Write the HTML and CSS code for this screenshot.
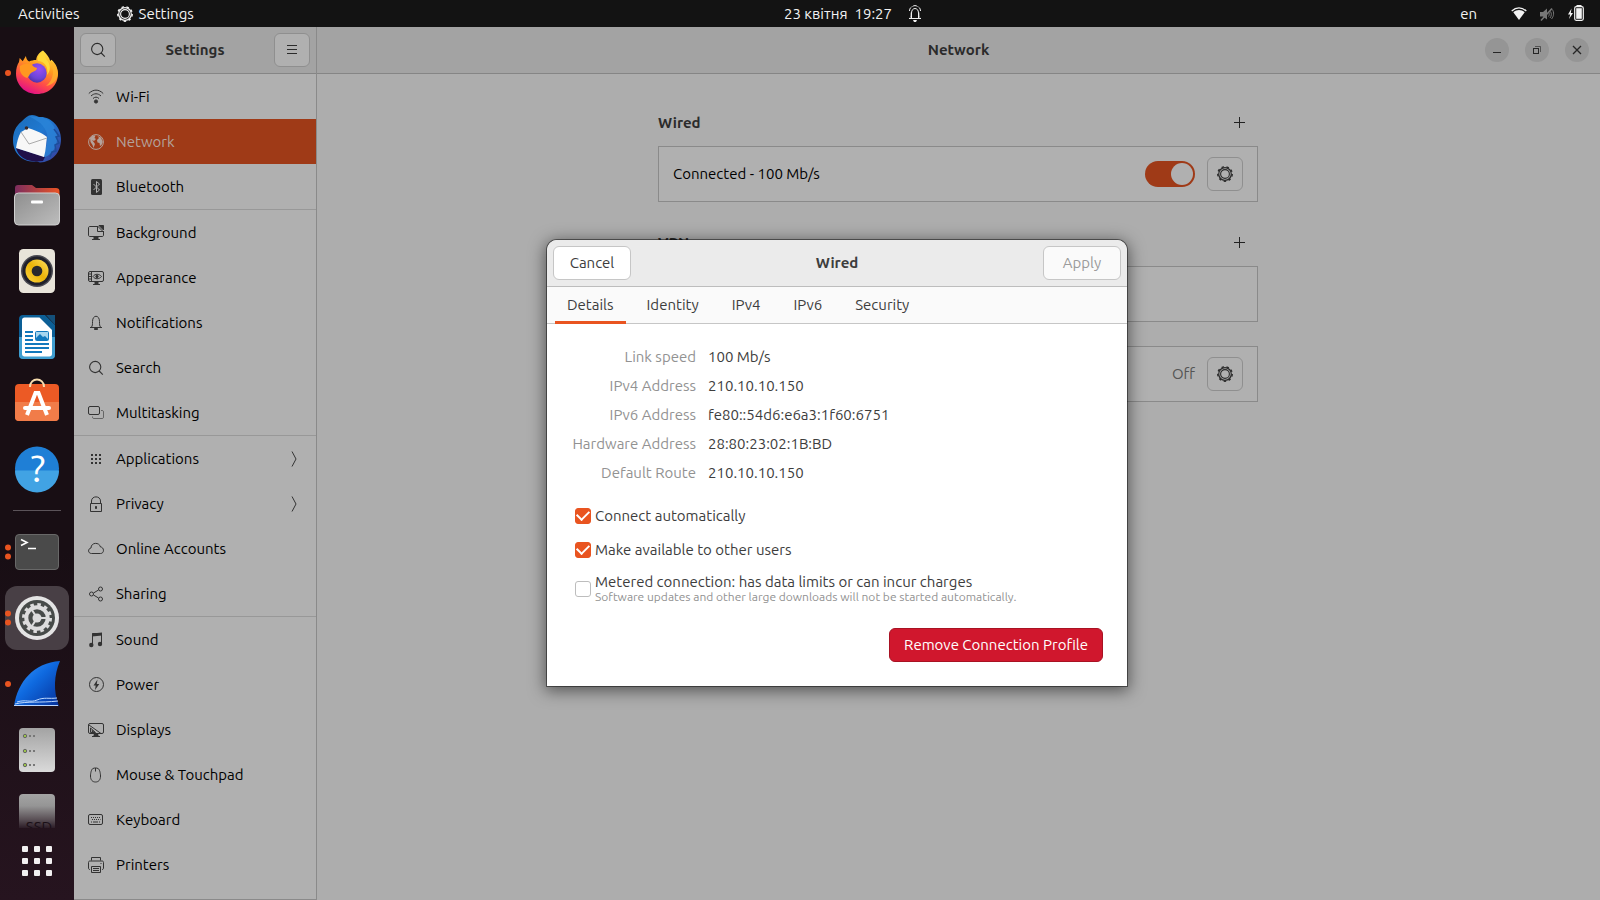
FILE: index.html
```html
<!DOCTYPE html>
<html lang="en">
<head>
<meta charset="utf-8">
<title>Settings – Network</title>
<link rel="stylesheet" href="styles.css">
</head>
<body>
<svg class="defs" width="0" height="0" aria-hidden="true">
  <symbol id="i-gear" viewBox="0 0 16 16"><circle cx="8" cy="8" r="6.3" fill="none" stroke="currentColor" stroke-width="1.2"/><circle cx="8" cy="8" r="4.4" fill="none" stroke="currentColor" stroke-width="1.1"/><circle cx="8" cy="8" r="7.2" fill="none" stroke="currentColor" stroke-width="1.5" stroke-dasharray="2.5 2.53"/></symbol>
  <symbol id="i-search" viewBox="0 0 16 16"><g fill="none" stroke="currentColor" stroke-width="1.1"><circle cx="7.2" cy="7" r="5.6"/><path d="M11.2 11l3.6 3.6"/></g></symbol>
  <symbol id="i-plus" viewBox="0 0 16 16"><path d="M8.5 2v11M3 7.5h11" stroke="currentColor" fill="none"/></symbol>
</svg>

<div class="desktop">
  <header class="topbar">
    <div class="topbar-left">
      <button type="button">Activities</button>
      <button type="button" class="app-menu"><svg width="16" height="16"><use href="#i-gear"/></svg>Settings</button>
    </div>
    <button type="button" class="clock"><span>23 квітня</span><span>19:27</span>
      <svg width="16" height="18" viewBox="0 0 16 18" fill="none" stroke="#f2f2f2"><path d="M2 13.500h12M4.500 13V8c0-6 7-6 7 0v5M2.500 6c0-1.500.5-3 2-4M13.500 6c0-1.500-.5-3-2-4M5.500 1.500c1.500-1.200 3.500-1.200 5 0M3.300 12.500c1-1 .9-3 .9-5M12.700 12.500c-1-1-.9-3-.9-5"/><path d="M6 15h4l-1 2H7z" fill="#f2f2f2" stroke="none"/></svg>
    </button>
    <div class="topbar-right">
      <button type="button" class="lang">en</button>
      <button type="button" class="status" aria-label="System menu">
        <svg width="16" height="16" viewBox="0 0 16 16"><path d="M.7 5c4.500-4 10.100-4 14.600 0" fill="none" stroke="#f2f2f2" stroke-width="1.300"/><path d="M2.300 6.200c3.500-2.900 7.900-2.900 11.400 0L8 14z" fill="#f2f2f2"/></svg>
        <svg width="16" height="16" viewBox="0 0 16 16" stroke="#777" fill="none"><path d="M1 6h3l4-3.500v11L4 10.500H1z" fill="#777" stroke="none"/><path d="M2 14.500L13 2.500" stroke="#777" stroke-width="1.500"/><path d="M9.500 6c1 1.300 1 3 0 4.500M11.500 5.500c1.300 2 1 4.500-.5 6.500M13.300 3.500c2 3 1.700 6.500-.8 9.500"/></svg>
        <svg width="18" height="18" viewBox="0 0 18 18" fill="#f2f2f2"><path d="M4.500 3.500L1 9.500h2.200L2 14 6 8H3.800z"/><rect x="9.500" y="0" width="5" height="2"/><rect x="7.700" y="1.700" width="8.600" height="13.600" rx="1.500" fill="none" stroke="#f2f2f2" stroke-width="1.200"/><rect x="9.200" y="3.200" width="5.600" height="10.600"/></svg>
      </button>
    </div>
  </header>

  <div class="workspace">
    <nav class="dock" aria-label="Dock">
      <button type="button" aria-label="Firefox"><svg width="74" height="64" viewBox="0 0 74 64">
        <defs><linearGradient id="ff" x1=".8" y1="0" x2=".35" y2="1"><stop offset="0" stop-color="#fff24a"/><stop offset=".4" stop-color="#ff9a1f"/><stop offset=".72" stop-color="#ff4a4a"/><stop offset="1" stop-color="#e00f88"/></linearGradient><radialGradient id="ffc" cx=".6" cy=".3" r=".8"><stop offset="0" stop-color="#9b4cf5"/><stop offset=".6" stop-color="#6b45d8"/><stop offset="1" stop-color="#4a2a9a"/></radialGradient></defs>
        <circle cx="8" cy="32" r="3" fill="#e95420"/>
        <path d="M43 9.500c4 4 6.500 7 7.200 10.500l1.300-1.300c4.500 4 6.500 9 6.500 13.800C58 44.500 49 53 37 53S16 44 16 32.500c0-5 1.200-8.500 3-11.500l.7-4 3 3.200 3.200-5.200c.4 3 1.500 4.500 3.300 5.500 2-1 4.300-1.500 7-1.500.3-4 3-7.500 6.800-9.500z" fill="url(#ff)"/>
        <circle cx="37" cy="32" r="9.700" fill="url(#ffc)"/>
        <path d="M20 25c5-3 11-3 14 1l3 1c0 3-4 3.500-6 5s-2 4-4 5c-5-2-8-6-7-12z" fill="#ff9820"/>
        <path d="M38 20c6 0 11 6 9 14 4-4 4-11-1-16l-3-8c-4 3-6 6-5 10z" fill="#ffd83a"/>
        <path d="M50 20c5 8 4 19-4 25 8-1 12-8 12-13-1-6-3-10-8-12z" fill="#ffb32c" opacity=".75"/></svg></button>
      <button type="button" aria-label="Thunderbird"><svg width="74" height="64" viewBox="0 0 74 64">
        <defs><linearGradient id="tb" x1="0" y1="0" x2="1" y2="1"><stop offset="0" stop-color="#1c6cb8"/><stop offset=".45" stop-color="#1f78d0"/><stop offset="1" stop-color="#3a3a98"/></linearGradient></defs>
        <path d="M29 8.500c4-1.500 8 .5 10 1.500 12-1 22 10 22 22 0 14-9 23-21 23.500l-3-1C22 56 13 46 13 33c0-8 3-14 8-18 3-3 5-5 8-6.500z" fill="url(#tb)"/>
        <path d="M29 9c6 4 13 6 17 15s-1 20-6 28c12-3 18-12 17-23S48 10 39 10z" fill="#2a84d8" opacity=".8"/>
        <path d="M16 41l29 9-2 4-6 .5c-11 0-19-5-21-13.500z" fill="#20104a"/>
        <path d="M21 25c3-1 4-3 7-4 6 2 13 4 19 9-1 6-1 13-3 20l-28-9c1-6 2-11 5-16z" fill="#f7f7f7"/>
        <path d="M21 25l8 12 18-6" fill="none" stroke="#aaa"/>
        <path d="M54 22l5 7-3 1 3 6-4 2 1 6-4 1-2 5" fill="none" stroke="#1c4d9b" stroke-width="1.500"/>
        <circle cx="26.500" cy="21" r="1.800" fill="#3a2a2a"/></svg></button>
      <button type="button" aria-label="Files"><svg width="74" height="64" viewBox="0 0 74 64">
        <defs><linearGradient id="fo"><stop offset="0" stop-color="#7c2d5e"/><stop offset="1" stop-color="#ea5425"/></linearGradient><linearGradient id="fg" x1="0" y1="0" x2="1" y2="1"><stop offset="0" stop-color="#8e8e8e"/><stop offset="1" stop-color="#bdbdbd"/></linearGradient></defs>
        <path d="M15 26V15c0-2 1-3 3-3h14l4 3h20c2 0 3.500 1 3.500 3v8z" fill="url(#fo)"/>
        <rect x="14.500" y="20" width="45" height="32" rx="4" fill="url(#fg)" stroke="#d0d0d0"/><rect x="31" y="27.500" width="12" height="3" rx="1" fill="#fff"/></svg></button>
      <button type="button" aria-label="Rhythmbox"><svg width="74" height="64" viewBox="0 0 74 64">
        <defs><linearGradient id="rb" x1="0" y1="1" x2="1" y2="0"><stop offset="0" stop-color="#ffd640"/><stop offset=".5" stop-color="#eab308"/><stop offset="1" stop-color="#ffe060"/></linearGradient></defs>
        <rect x="19" y="10" width="36" height="44" rx="4.500" fill="#e8e4da"/><circle cx="37" cy="32" r="16" fill="#4a4a52"/><circle cx="37" cy="32" r="14.500" fill="#20202a"/><circle cx="37" cy="32" r="11.500" fill="url(#rb)"/><circle cx="37" cy="32" r="5.300" fill="#29292d"/></svg></button>
      <button type="button" aria-label="LibreOffice Writer"><svg width="74" height="64" viewBox="0 0 74 64">
        <path d="M23 10h22l10 10v30c0 2.500-1.500 4-4 4H23c-2.500 0-4-1.500-4-4V14c0-2.500 1.500-4 4-4z" fill="#0c5f96"/><path d="M19 32h36v18c0 2.500-1.500 4-4 4H23c-2.500 0-4-1.500-4-4z" fill="#3f9ed0"/>
        <path d="M46 10h9v10z" fill="#14507a"/><path d="M22 15c0-1.500 1-2.500 2.500-2.500h15L52 25v24c0 1.500-1 2.500-2.500 2.500h-25C23 51.500 22 50.500 22 49z" fill="#fff"/>
        <path d="M25 27h8M25 31h8M25 35h8M25 39h24M25 43h24M25 47h17" stroke="#1279bd" stroke-width="2"/><rect x="35.500" y="26.500" width="13" height="9" rx="1" fill="#a7d6ef" stroke="#1279bd"/><path d="M36 35v-2l4-4 3 3 2-1 3 3v1z" fill="#1279bd"/></svg></button>
      <button type="button" aria-label="Ubuntu Software"><svg width="74" height="64" viewBox="0 0 74 64">
        <rect x="15" y="13" width="44" height="37" rx="4" fill="#ec5a25"/><path d="M15 31h44v15c0 2.500-1.500 4-4 4H19c-2.500 0-4-1.500-4-4z" fill="#f17c49"/><path d="M30 16c0-10 14-10 14 0" fill="none" stroke="#f7dcae" stroke-width="2"/>
        <g stroke="#fff" fill="none"><path d="M27 44l8.500-22h3l8.500 22" stroke-width="4"/><path d="M25 37h24" stroke-width="4" stroke-linecap="round"/></g></svg></button>
      <button type="button" aria-label="Help"><svg width="74" height="64" viewBox="0 0 74 64">
        <circle cx="37" cy="31.500" r="22" fill="#1f7fd6"/><path d="M15 33.500h44a22 22 0 0 1-44 0z" fill="#41a3e4"/><text x="38" y="45" text-anchor="middle" class="glyph-help">?</text></svg></button>
      <hr>
      <button type="button" aria-label="Terminal"><svg width="74" height="64" viewBox="0 0 74 64">
        <circle cx="8" cy="27.500" r="3" fill="#e95420"/><circle cx="8" cy="36.500" r="3" fill="#e95420"/>
        <rect x="15.500" y="14.500" width="43" height="35" rx="3.500" fill="#4a4a4a" stroke="#686868"/><path d="M21 19.500l6 3-6 3M28 28.500h8" fill="none" stroke="#fff" stroke-width="1.600"/></svg></button>
      <button type="button" aria-label="Settings" class="active"><svg width="74" height="64" viewBox="0 0 74 64">
        <circle cx="8" cy="27.500" r="3" fill="#e95420"/><circle cx="8" cy="36.500" r="3" fill="#e95420"/>
        <circle cx="37" cy="32" r="22" fill="#e4e4e4"/><circle cx="37" cy="32" r="18" fill="#474b49"/>
        <circle cx="37" cy="32" r="13.500" fill="none" stroke="#dcdcdc" stroke-width="3" stroke-dasharray="3.530 3.530"/><circle cx="37" cy="32" r="10.700" fill="none" stroke="#dcdcdc" stroke-width="4"/><circle cx="37" cy="32" r="4.500" fill="#dcdcdc"/><path d="M37 32h9M37 32l-5 8M37 32l-5-8" stroke="#dcdcdc" stroke-width="2"/></svg></button>
      <button type="button" aria-label="Wireshark"><svg width="74" height="64" viewBox="0 0 74 64">
        <defs><linearGradient id="ws" x1="0" y1="0" x2="1" y2="1"><stop offset="0" stop-color="#3b9cff"/><stop offset=".45" stop-color="#0f6ae0"/><stop offset="1" stop-color="#052f98"/></linearGradient></defs>
        <circle cx="8" cy="32" r="3" fill="#e95420"/><path d="M14 54C18 29 34 11 60 9c-6 14-7 30-1 45z" fill="url(#ws)"/><path d="M17 50c9-3 13 1 20-2s12-1 20-2M15 52c12-3 25-1 43-3M14 53.500h44" fill="none" stroke="#bcd8ff"/></svg></button>
      <button type="button" aria-label="Server"><svg width="74" height="64" viewBox="0 0 74 64">
        <defs><linearGradient id="sv" x1="0" y1="0" x2="0" y2="1"><stop offset="0" stop-color="#a3a3a3"/><stop offset="1" stop-color="#dadada"/></linearGradient></defs>
        <rect x="19" y="10" width="36" height="44" rx="4" fill="url(#sv)"/><g fill="#9bc34a" stroke="#666"><circle cx="25" cy="18" r="1.700"/><circle cx="25" cy="33" r="1.700"/><circle cx="25" cy="47" r="1.700"/></g><path d="M29 18h2m2 0h2M29 33h2m2 0h2M29 47h2m2 0h2" stroke="#777" stroke-width="2"/></svg></button>
      <button type="button" aria-label="SSD drive" class="clipped"><svg width="74" height="44" viewBox="0 0 74 44">
        <defs><linearGradient id="sd" x1="0" y1="0" x2="0" y2="1"><stop offset="0" stop-color="#a4a4a4"/><stop offset=".35" stop-color="#959595"/><stop offset=".75" stop-color="#5a5056"/><stop offset="1" stop-color="#2c1d27"/></linearGradient></defs>
        <path d="M23 10h28c2.500 0 4 1.500 4 4v30H19V14c0-2.500 1.500-4 4-4z" fill="url(#sd)"/><text x="39" y="48" text-anchor="middle" class="glyph-ssd">SSD</text></svg></button>
      <button type="button" aria-label="Show Applications" class="apps"><svg width="30" height="30" viewBox="0 0 30 30" fill="#f2f0f1"><rect width="6" height="6" rx="1"/><rect x="12" width="6" height="6" rx="1"/><rect x="24" width="6" height="6" rx="1"/><rect y="12" width="6" height="6" rx="1"/><rect x="12" y="12" width="6" height="6" rx="1"/><rect x="24" y="12" width="6" height="6" rx="1"/><rect y="24" width="6" height="6" rx="1"/><rect x="12" y="24" width="6" height="6" rx="1"/><rect x="24" y="24" width="6" height="6" rx="1"/></svg></button>
    </nav>

    <div class="window">
      <aside class="sidebar">
        <div class="headerbar side-head">
          <button type="button" class="icon-btn" aria-label="Search"><svg width="16" height="16"><use href="#i-search"/></svg></button>
          <h1>Settings</h1>
          <button type="button" class="icon-btn" aria-label="Menu"><svg width="16" height="16" viewBox="0 0 16 16"><path d="M3 3.500h10M3 7.500h10M3 11.500h10" stroke="currentColor"/></svg></button>
        </div>
        <ul class="panels">
          <li><a href="#"><svg width="16" height="16" viewBox="0 0 16 16" fill="none" stroke="currentColor"><path d="M.8 4.500c4.500-4.500 9.900-4.500 14.400 0M3 7c3.200-3 6.800-3 10 0M5 9.500c2-1.800 4-1.800 6 0"/><circle cx="8" cy="12.500" r="1.600" fill="currentColor"/></svg>Wi-Fi</a></li>
          <li><a href="#" class="selected" aria-current="page"><svg width="16" height="16" viewBox="0 0 16 16"><circle cx="8" cy="8" r="7.400" fill="none" stroke="currentColor"/><path d="M2 4l3-2.500 2.500 0L6.500 4 8 5 6 7 4 6l2 2.500L7 10l-1.500 4L4.500 11 2.500 8zM9.500 2l3.500 1.500L14.800 8l-1.300 3-1.500 1-.5-3-2-.5-.5-2.500 2-2z" fill="currentColor"/></svg>Network</a></li>
          <li class="group-end"><a href="#"><svg width="16" height="16" viewBox="0 0 16 16"><rect x="3" width="11" height="16" rx="1.500" fill="currentColor"/><path d="M5.500 5l6 6L8.500 13.500v-11l3 2.500-6 6" fill="none" stroke="#b0b0b0"/></svg>Bluetooth</a></li>
          <li><a href="#"><svg width="16" height="16" viewBox="0 0 16 16" fill="none" stroke="currentColor"><path d="M9 1.500H2c-1 0-1.500.5-1.500 1.500v7c0 1 .5 1.500 1.500 1.500h12c1 0 1.500-.5 1.500-1.500V6"/><path d="M9.500 1v5.500H15z"/><path d="M11 .5h4.500V5z" fill="currentColor"/><path d="M6 12h4v2.500h2H4h2z" fill="currentColor"/></svg>Background</a></li>
          <li><a href="#"><svg width="16" height="16" viewBox="0 0 16 16" fill="none" stroke="currentColor"><rect x=".5" y="1.500" width="15" height="10" rx="1.500"/><path d="M3.500 2v9M0 4h3M0 6.500h3M0 9h3M5 6.500c2-3 6-3 8.500 0-2.500 3-6.500 3-8.500 0z"/><circle cx="9" cy="6.500" r="1.200" fill="currentColor"/><path d="M7 12h3v2.500h2H5h2z" fill="currentColor"/></svg>Appearance</a></li>
          <li><a href="#"><svg width="16" height="16" viewBox="0 0 16 16" fill="none" stroke="currentColor"><path d="M2 12.500h12M3.500 12c1-1.200 1-2.500 1-5.500 0-7 7-7 7 0 0 3 0 4.300 1 5.500"/><path d="M6.500 13.500h3v1h-3z" fill="currentColor"/></svg>Notifications</a></li>
          <li><a href="#"><svg width="16" height="16"><use href="#i-search"/></svg>Search</a></li>
          <li class="group-end"><a href="#"><svg width="16" height="16" viewBox="0 0 16 16" fill="none" stroke="currentColor"><rect x=".5" y="1.500" width="11" height="8" rx="1.500"/><path opacity=".6" d="M13 5.500h1c1 0 1.500.5 1.500 1.500v5c0 1-.5 1.500-1.500 1.500H6c-1 0-1.500-.5-1.500-1.500v-.5"/></svg>Multitasking</a></li>
          <li><a href="#"><svg width="16" height="16" viewBox="0 0 16 16"><path d="M3 4h2m2 0h2m2 0h2M3 8h2m2 0h2m2 0h2M3 12h2m2 0h2m2 0h2" stroke="currentColor" stroke-width="2"/></svg>Applications<svg class="chevron" width="8" height="16" viewBox="0 0 8 16"><path d="M2 .5L6 8l-4 7.500" fill="none" stroke="currentColor"/></svg></a></li>
          <li><a href="#"><svg width="16" height="16" viewBox="0 0 16 16" fill="none" stroke="currentColor"><path d="M2.500 7.500h11v8h-11zM3.500 7V5c0-5.500 9-5.500 9 0v2"/><path d="M7.500 10.500h1v2h-1z" fill="currentColor"/></svg>Privacy<svg class="chevron" width="8" height="16" viewBox="0 0 8 16"><path d="M2 .5L6 8l-4 7.500" fill="none" stroke="currentColor"/></svg></a></li>
          <li><a href="#"><svg width="16" height="16" viewBox="0 0 16 16" fill="none" stroke="currentColor"><path d="M3.500 12.500C-.3 12.500-.3 7.500 3 7c0-6 8.500-6 9.500-1 3.700 0 4.200 6.500 0 6.500z"/></svg>Online Accounts</a></li>
          <li class="group-end"><a href="#"><svg width="16" height="16" viewBox="0 0 16 16" fill="none" stroke="currentColor"><circle cx="3.500" cy="8" r="2"/><circle cx="12.500" cy="3" r="2"/><circle cx="12.500" cy="13" r="2"/><path d="M5.500 7l5-3M5.500 9l5 3"/></svg>Sharing</a></li>
          <li><a href="#"><svg width="16" height="16" viewBox="0 0 16 16"><path d="M4.500 13V1.500h9V12" fill="none" stroke="currentColor"/><path d="M4 1.500L14 .5v3l-10 1z" fill="currentColor"/><circle cx="3.300" cy="13" r="2.200" fill="currentColor"/><circle cx="12" cy="12" r="2.200" fill="currentColor"/></svg>Sound</a></li>
          <li><a href="#"><svg width="16" height="16" viewBox="0 0 16 16"><circle cx="8.500" cy="7.500" r="7" fill="none" stroke="currentColor"/><path d="M9.500 2.500L5.500 8.500h2.200l-.7 4.500 4.300-6H8.800z" fill="currentColor"/></svg>Power</a></li>
          <li><a href="#"><svg width="16" height="16" viewBox="0 0 16 16" fill="none" stroke="currentColor"><rect x=".5" y="1.500" width="15" height="10" rx="1.500"/><path d="M1 3l12 8.500M2.500 10.500V6l5 4.500zM4 9.500V8.500l1.500 1z"/><path d="M6 12.500h4v2h2H4h2z" fill="currentColor"/></svg>Displays</a></li>
          <li><a href="#"><svg width="16" height="16" viewBox="0 0 16 16" fill="none" stroke="currentColor"><path d="M5 1.500c1.500-.7 3.500-.7 5 0 1.500.5 2.500 4.500 2.500 7.500 0 4-2 6-5 6s-5-2-5-6c0-3 1-7 2.500-7.500zM7.500 1v3.500"/></svg>Mouse &amp; Touchpad</a></li>
          <li><a href="#"><svg width="16" height="16" viewBox="0 0 16 16" fill="none" stroke="currentColor"><rect x=".5" y="2.500" width="14" height="10" rx="1.500"/><path d="M3 5.500h9.500M4 7.500h8.500" stroke-dasharray="1 1"/><path d="M3 10h1m1 0h5m1 0h1"/></svg>Keyboard</a></li>
          <li><a href="#"><svg width="16" height="16" viewBox="0 0 16 16" fill="none" stroke="currentColor"><path d="M3.500 3.500v-3h9v3M2 12.500c-1 0-1.500-.5-1.500-1.500V5.500c0-1 .5-1.500 1.500-1.500h12c1 0 1.500.5 1.500 1.500V11c0 1-.5 1.500-1.500 1.500M3.500 9.500h9v6h-9zM5 11.500h6M5 13.500h6M12.500 6.500h1"/></svg>Printers</a></li>
        </ul>
      </aside>

      <main class="content">
        <div class="headerbar main-head">
          <h2>Network</h2>
          <div class="win-controls">
            <button type="button" aria-label="Minimize"><svg width="16" height="16" viewBox="0 0 16 16"><path d="M4 10.500h8" stroke="currentColor"/></svg></button>
            <button type="button" aria-label="Restore"><svg width="16" height="16" viewBox="0 0 16 16" fill="none" stroke="currentColor"><rect x="4.500" y="6.500" width="5" height="5"/><path opacity=".6" d="M6 4.500h5.500V10"/></svg></button>
            <button type="button" aria-label="Close"><svg width="16" height="16" viewBox="0 0 16 16"><path d="M4 4l8 8M12 4l-8 8" stroke="currentColor" stroke-width="1.300"/></svg></button>
          </div>
        </div>
        <div class="network">
          <section>
            <div class="section-head"><h3>Wired</h3><button type="button" aria-label="Add wired connection"><svg width="16" height="16"><use href="#i-plus"/></svg></button></div>
            <div class="card"><label for="wired-on">Connected - 100 Mb/s</label><input type="checkbox" role="switch" id="wired-on" class="switch" checked><button type="button" class="icon-btn" aria-label="Wired options"><svg width="16" height="16"><use href="#i-gear"/></svg></button></div>
          </section>
          <section>
            <div class="section-head"><h3>VPN</h3><button type="button" aria-label="Add VPN"><svg width="16" height="16"><use href="#i-plus"/></svg></button></div>
            <div class="card"></div>
          </section>
          <section>
            <div class="card"><span class="off">Off</span><button type="button" class="icon-btn" aria-label="Proxy options"><svg width="16" height="16"><use href="#i-gear"/></svg></button></div>
          </section>
        </div>
      </main>

      <div class="modal-layer">
        <div class="dialog" role="dialog" aria-labelledby="dlg-title">
          <div class="dialog-head">
            <button type="button" class="btn">Cancel</button>
            <h2 id="dlg-title">Wired</h2>
            <button type="button" class="btn" disabled>Apply</button>
          </div>
          <div class="tabs" role="tablist">
            <button type="button" role="tab" aria-selected="true">Details</button>
            <button type="button" role="tab" aria-selected="false">Identity</button>
            <button type="button" role="tab" aria-selected="false">IPv4</button>
            <button type="button" role="tab" aria-selected="false">IPv6</button>
            <button type="button" role="tab" aria-selected="false">Security</button>
          </div>
          <div class="dialog-body">
            <dl class="details">
              <dt>Link speed</dt><dd>100 Mb/s</dd>
              <dt>IPv4 Address</dt><dd>210.10.10.150</dd>
              <dt>IPv6 Address</dt><dd>fe80::54d6:e6a3:1f60:6751</dd>
              <dt>Hardware Address</dt><dd>28:80:23:02:1B:BD</dd>
              <dt>Default Route</dt><dd>210.10.10.150</dd>
            </dl>
            <div class="options">
              <label><input type="checkbox" class="check" checked>Connect automatically</label>
              <label><input type="checkbox" class="check" checked>Make available to other users</label>
              <label><input type="checkbox" class="check"><span class="two-line"><span>Metered connection: has data limits or can incur charges</span><small>Software updates and other large downloads will not be started automatically.</small></span></label>
            </div>
            <button type="button" class="remove">Remove Connection Profile</button>
          </div>
        </div>
      </div>
    </div>
  </div>
</div>
</body>
</html>
```

FILE: styles.css
```css
* { box-sizing: border-box; }

html, body { height: 100%; }

body {
  margin: 0;
  overflow: hidden;
  background: #180e14;
  color: #000;
  font: 15px/20px Ubuntu, "Noto Sans", sans-serif;
}

h1, h2, h3, ul, dl, dd { margin: 0; padding: 0; }
h1, h2, h3 { font-size: 15px; font-weight: bold; color: #2b2b2b; }
svg { display: block; flex: none; }
.defs { position: absolute; }

button {
  margin: 0;
  padding: 0;
  border: 0;
  background: none;
  color: inherit;
  font: inherit;
  cursor: pointer;
}

.desktop { display: flex; flex-direction: column; height: 100vh; }

/* Top bar */
.topbar {
  display: grid;
  grid-template-columns: 1fr auto 1fr;
  align-items: center;
  height: 27px;
  background: #131313;
  color: #f2f2f2;
}
.topbar-left, .topbar-right, .app-menu, .clock, .status { display: flex; align-items: center; }
.topbar-left { gap: 37px; padding-left: 18px; }
.app-menu { gap: 6px; }
.clock { gap: 7px; padding-left: 107px; }
.clock svg { margin-left: 8px; }
.topbar-right { justify-content: flex-end; gap: 34px; padding-right: 15px; }
.status { gap: 12px; }

.workspace { display: flex; flex: 1; min-height: 0; }

/* Dock */
.dock {
  display: flex;
  flex-direction: column;
  align-items: center;
  gap: 2px;
  width: 74px;
  padding-top: 14px;
  background: linear-gradient(#180e14 60%, #26141f);
}
.dock hr { width: 48px; height: 1px; margin: 7px 0; border: 0; background: #5b5359; }
.dock .active { width: 64px; border-radius: 12px; background: #483f45; }
.dock .active svg { margin-left: -5px; }
.apps { margin-top: 16px; }
.glyph-help { fill: #fff; font: 38px Ubuntu, "Noto Sans", sans-serif; }
.glyph-ssd { fill: #1a0f16; font: 15px Ubuntu, "Noto Sans", sans-serif; }

/* Settings window */
.window { position: relative; display: flex; flex: 1; min-width: 0; background: #adadad; }
.headerbar {
  display: flex;
  align-items: center;
  height: 47px;
  padding: 0 6px;
  border-bottom: 1px solid #858585;
  background: #a3a3a3;
}
.sidebar {
  display: flex;
  flex-direction: column;
  width: 243px;
  border-right: 1px solid #8a8a8a;
  border-bottom: 1px solid #8a8a8a;
  background: #b0b0b0;
}
.side-head { justify-content: space-between; }
.icon-btn {
  display: grid;
  place-items: center;
  width: 36px;
  height: 34px;
  border: 1px solid #8f8f8f;
  border-radius: 6px;
  background: #b0b0b0;
  color: #2b2b2b;
}
.panels { list-style: none; }
.panels a {
  display: flex;
  align-items: center;
  gap: 12px;
  height: 45px;
  padding: 0 18px 0 14px;
  color: #000;
  text-decoration: none;
}
.panels svg { color: #333; }
.panels .group-end { border-bottom: 1px solid #989898; }
.panels a.selected { background: #9f3a17; color: #b4a29b; }
.panels .selected svg { color: #b4a29b; }
.chevron { margin-left: auto; }

.content { flex: 1; min-width: 0; }
.main-head { position: relative; justify-content: center; }
.win-controls { position: absolute; right: 11px; display: flex; gap: 16px; }
.win-controls button {
  display: grid;
  place-items: center;
  width: 24px;
  height: 24px;
  border-radius: 50%;
  background: #959595;
  color: #262626;
}

.network {
  display: flex;
  flex-direction: column;
  align-items: center;
  gap: 24px;
  padding: 32px 1px 0 0;
}
.network section { width: 100%; max-width: 600px; }
.section-head {
  display: flex;
  align-items: center;
  justify-content: space-between;
  height: 34px;
  margin-bottom: 6px;
  padding-right: 11px;
  color: #222;
}
.card {
  display: flex;
  align-items: center;
  justify-content: flex-end;
  gap: 12px;
  height: 56px;
  padding: 0 14px;
  border: 1px solid #8a8a8a;
  background: #b0b0b0;
}
.card label { margin-right: auto; }
.off { color: #555; }

.switch {
  appearance: none;
  width: 50px;
  height: 26px;
  margin: 0;
  padding: 2px;
  border-radius: 13px;
  background: #9f3a17;
}
.switch::before {
  content: "";
  display: block;
  width: 22px;
  height: 22px;
  margin-left: auto;
  border-radius: 50%;
  background: #b0b0b0;
}

/* Connection dialog */
.modal-layer {
  position: absolute;
  inset: 0;
  display: flex;
  align-items: center;
  justify-content: center;
  padding-bottom: 2px;
}
.dialog {
  width: 580px;
  overflow: hidden;
  border-radius: 10px 10px 0 0;
  background: #fff;
  color: #3d3d3d;
  box-shadow: 0 0 0 1px rgba(0, 0, 0, .45), 0 3px 16px 2px rgba(0, 0, 0, .5);
}
.dialog h2 { color: #3d3d3d; }
.dialog-head {
  display: flex;
  align-items: center;
  justify-content: space-between;
  height: 47px;
  padding: 0 6px;
  border-bottom: 1px solid #bdbdbd;
  background: #ebebeb;
}
.btn {
  width: 78px;
  height: 34px;
  border: 1px solid #c6c6c6;
  border-radius: 6px;
  background: #fff;
}
.btn:disabled { background: #fafafa; color: #9b9b9b; }
.tabs {
  display: flex;
  gap: 9px;
  height: 37px;
  padding: 0 8px;
  border-bottom: 1px solid #c6c6c6;
  background: #fafafa;
}
.tabs button { height: 37px; padding: 0 12px; border-bottom: 3px solid transparent; border-top: 3px solid transparent; }
.tabs [aria-selected="true"] { border-bottom-color: #e95420; }

.dialog-body { display: flex; flex-direction: column; padding: 23px 24px 24px; }
.details { display: grid; grid-template-columns: 125px 1fr; gap: 9px 12px; }
.details dt { color: #929292; text-align: right; white-space: nowrap; }
.options { display: flex; flex-direction: column; gap: 14px; margin: 23px 0 24px; padding-left: 4px; }
.options label { display: flex; align-items: center; gap: 4px; }
.check {
  appearance: none;
  display: grid;
  place-items: center;
  width: 16px;
  height: 16px;
  margin: 0;
  border: 1px solid #bdbdbd;
  border-radius: 3px;
  background: #fff;
}
.check:checked { border-color: #e95420; background: #e95420; }
.check:checked::before {
  content: "";
  width: 10px;
  height: 6px;
  margin-bottom: 3px;
  border: solid #fff;
  border-width: 0 0 2px 2px;
  transform: rotate(-45deg);
}
.two-line { display: flex; flex-direction: column; line-height: 16px; }
.two-line small { color: #929292; font-size: 12px; line-height: 14px; }
.remove {
  align-self: flex-end;
  height: 34px;
  padding: 0 14px;
  border: 1px solid #a81223;
  border-radius: 6px;
  background: #d0172d;
  color: #fff;
}
```
